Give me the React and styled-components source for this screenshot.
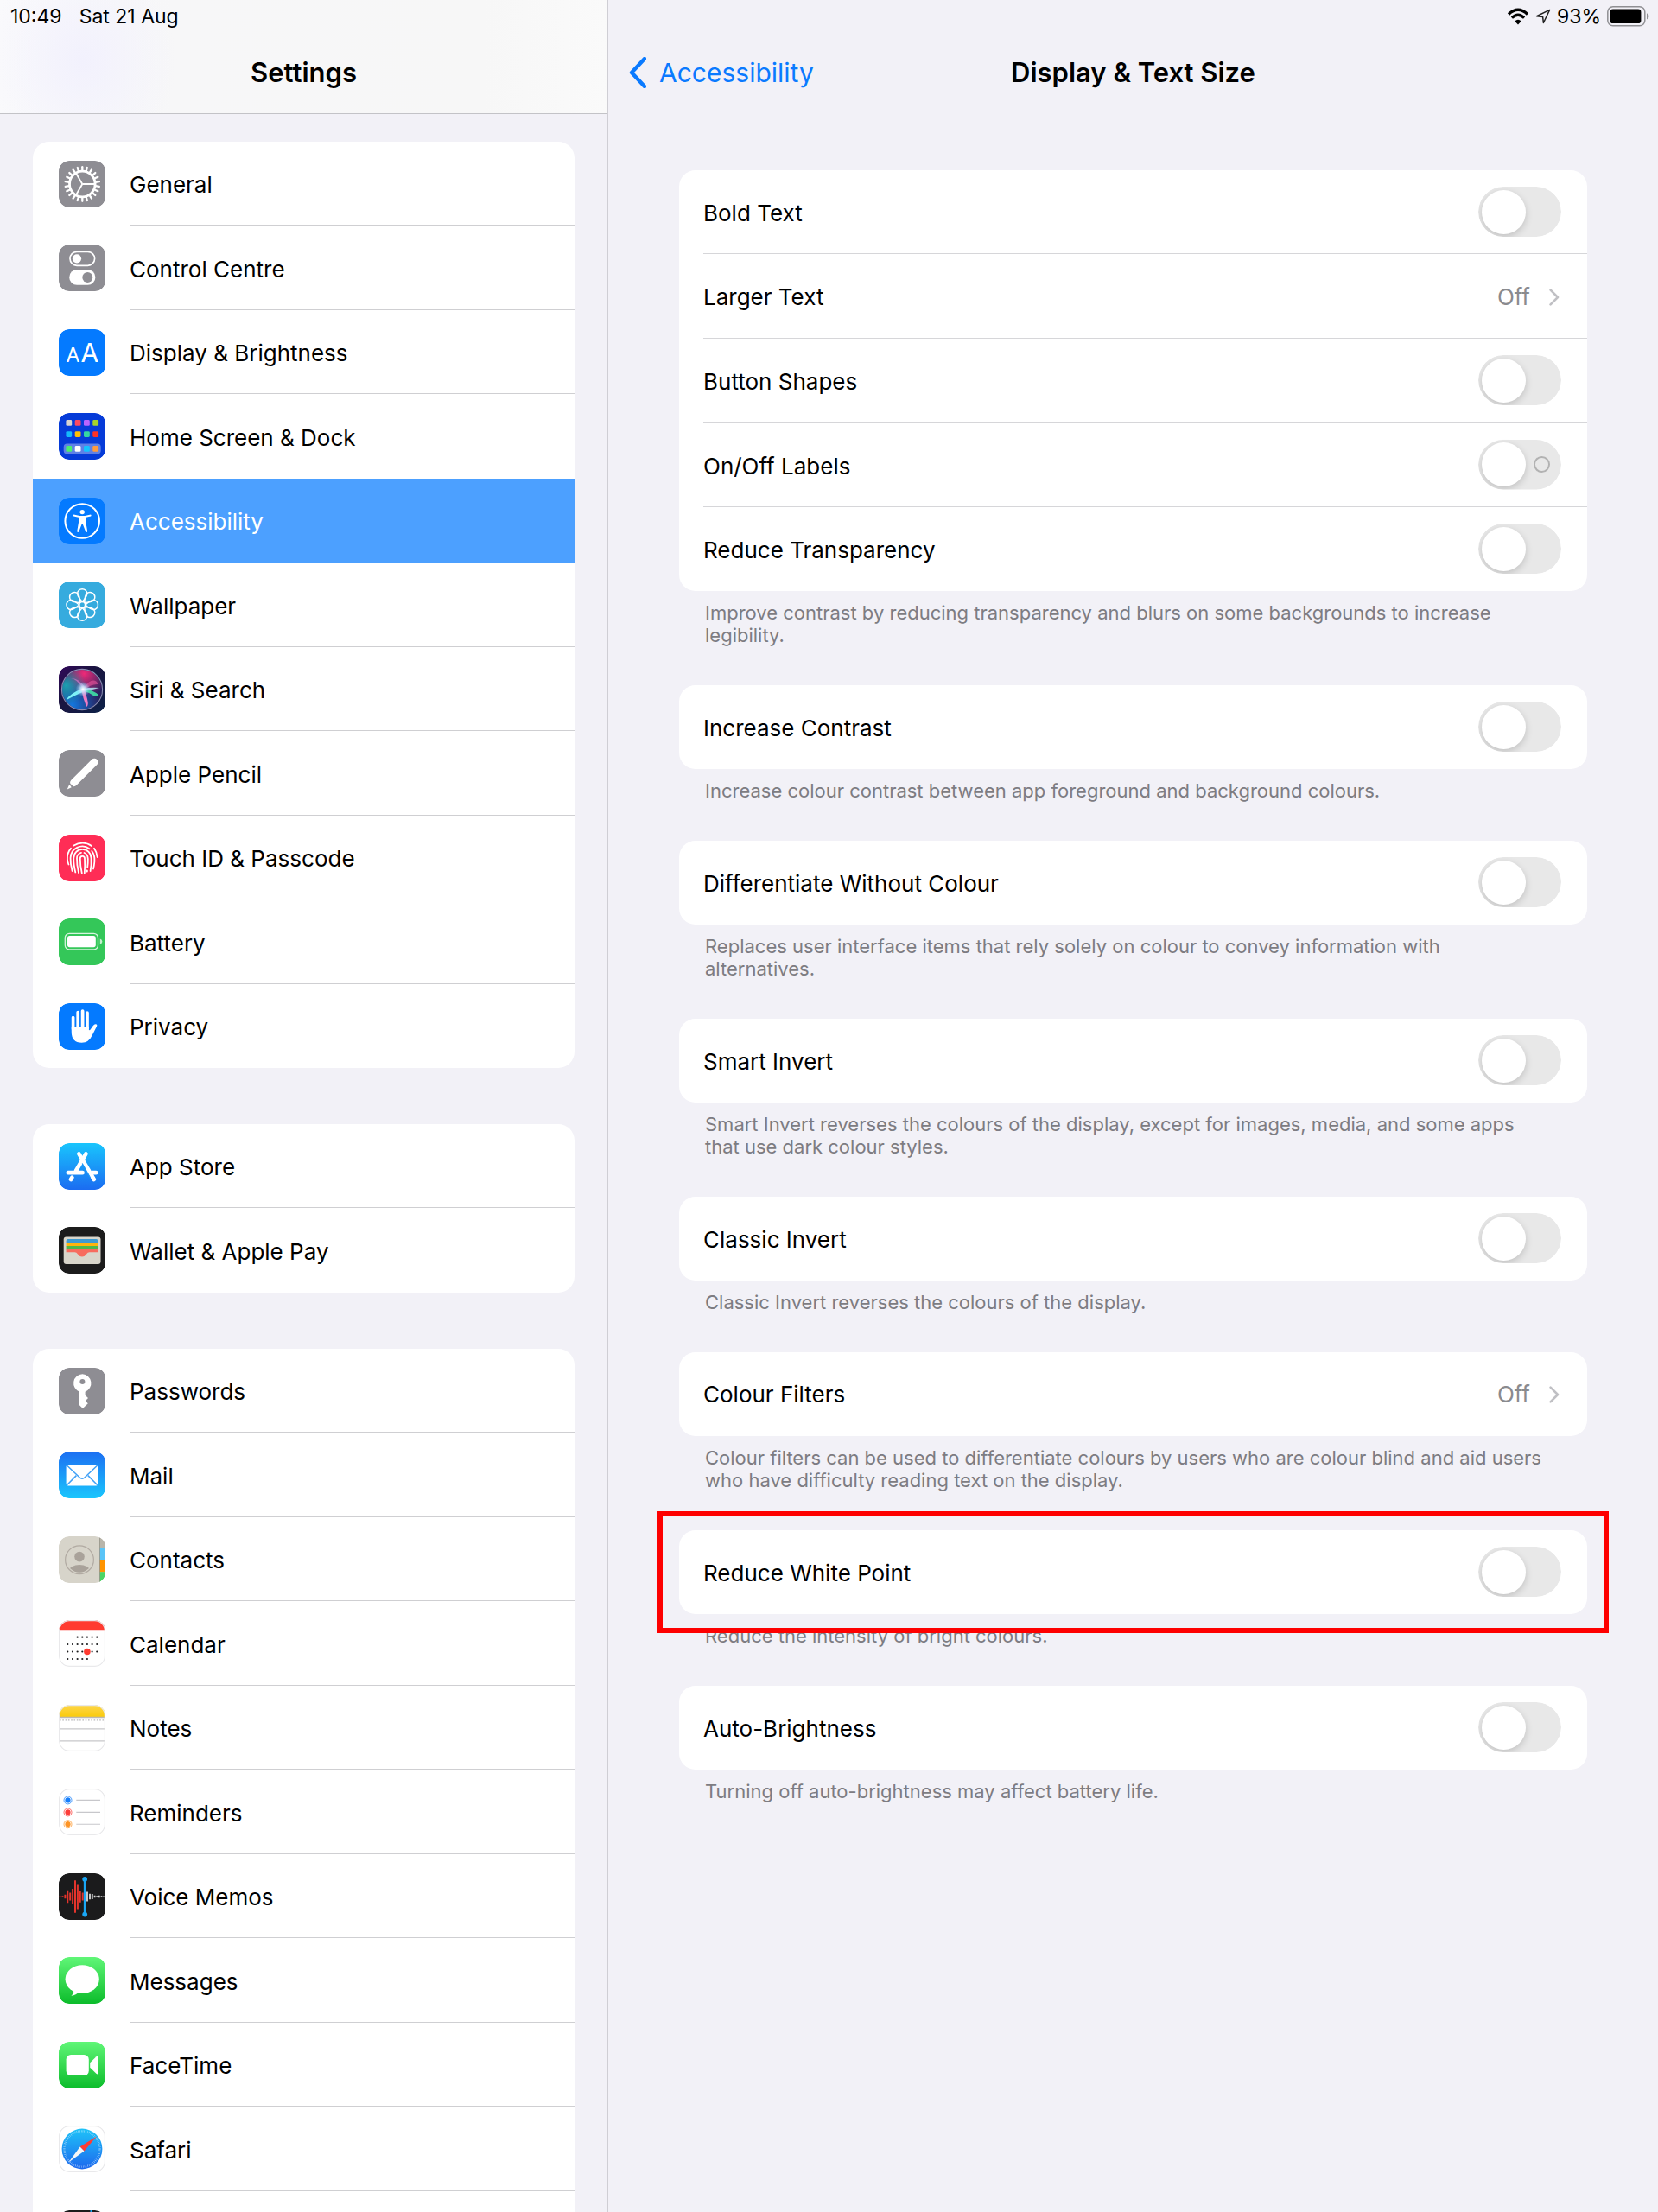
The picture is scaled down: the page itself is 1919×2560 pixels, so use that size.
import React, { useId, useState } from "react";
import styled, { createGlobalStyle, css } from "styled-components";

const GlobalStyle = createGlobalStyle`
  *, *::before, *::after { box-sizing: border-box; }
  html, body { margin: 0; height: 100%; }
  body {
    background: #f2f1f7;
    color: #000;
    font-family: Inter, "Liberation Sans", sans-serif;
    -webkit-font-smoothing: antialiased;
  }
  ul { list-style: none; margin: 0; padding: 0; }
  h1, h2, p { margin: 0; }
`;

/* ---------- layout ---------- */

const Screen = styled.div`
  display: grid;
  grid-template-columns: minmax(360px, 704px) 1fr;
  height: 100vh;
  overflow: hidden;
`;

const Sidebar = styled.aside`
  display: flex;
  flex-direction: column;
  min-height: 0;
  border-right: 1px solid #cfced4;
`;

const SidebarHeader = styled.header`
  flex: none;
  border-bottom: 1px solid #c3c3c7;
  background:
    radial-gradient(ellipse 110px 120px at 95px 70px, #f2f1fd 0, rgba(242, 241, 253, 0) 100%),
    linear-gradient(90deg, #fafafc 0, #f7f7f8 200px, #f7f7f7 560px, #fafafa 100%);
`;

const SidebarScroll = styled.nav`
  display: flex;
  flex-direction: column;
  gap: 65px;
  flex: 1;
  min-height: 0;
  padding: 32px 38px 0;
  overflow-y: auto;
  scrollbar-width: none;
`;

const Detail = styled.main`
  min-width: 0;
  overflow: hidden;
`;

const DetailBody = styled.div`
  padding: 66px 82px;
`;

const StatusBar = styled.div`
  display: flex;
  align-items: center;
  justify-content: ${(p) => (p.$end ? "flex-end" : "flex-start")};
  gap: ${(p) => (p.$end ? "7px" : "20px")};
  height: 37px;
  padding: 0 10px 0 12px;
  font-size: 23px;
  line-height: 36px;
`;

const TitleRow = styled.div`
  display: grid;
  grid-template-columns: 1fr auto 1fr;
  align-items: center;
  height: 94px;
  padding: 0 24px;
`;

const Title = styled.h1`
  grid-column: 2;
  font-size: 31px;
  font-weight: 600;
  line-height: 36px;
`;

const BackLink = styled.a`
  display: flex;
  align-items: center;
  justify-self: start;
  gap: 15px;
  color: #0a7aff;
  font-size: 30px;
  line-height: 36px;
  text-decoration: none;
`;

/* ---------- cards and rows ---------- */

const Card = styled.ul`
  flex: none;
  background: #fff;
  border-radius: 19px;
  overflow: hidden;
`;

const rowHeight = css`
  height: 97px;
  &:nth-child(even) { height: 98px; }
`;

const NavItem = styled.li`
  ${rowHeight}
`;

const NavLink = styled.a`
  display: flex;
  align-items: center;
  gap: 28px;
  height: 100%;
  padding-left: 30px;
  color: ${(p) => (p.$selected ? "#fff" : "#000")};
  background: ${(p) => (p.$selected ? "#4ca0ff" : "transparent")};
  font-size: 26px;
  line-height: 34px;
  text-decoration: none;
`;

const NavLabel = styled.span`
  display: flex;
  flex: 1;
  align-items: center;
  align-self: stretch;
  padding-top: 4px;
  border-bottom: 1px solid ${(p) => (p.$line ? "#cfcfd2" : "transparent")};
`;

const IconSvg = styled.svg`
  flex: none;
  display: block;
  width: 54px;
  height: 54px;
  border-radius: 12px;
`;

const IconText = styled.text`
  font-family: Inter, "Liberation Sans", sans-serif;
  fill: #fff;
`;

const OptionItem = styled.li`
  ${rowHeight}
  padding-left: 28px;
`;

const OptionRow = styled.div`
  display: flex;
  align-items: center;
  gap: 28px;
  height: 100%;
  padding-right: 30px;
  border-bottom: 1px solid ${(p) => (p.$line ? "#d6d6d9" : "transparent")};
  font-size: 26px;
  line-height: 34px;
`;

const OptionLabel = styled.label`
  flex: 1;
  padding-top: 4px;
`;

const OptionLink = styled.a`
  display: flex;
  flex: 1;
  align-items: center;
  gap: 22px;
  padding: 2px 2px 0 0;
  color: #000;
  text-decoration: none;
`;

const OptionName = styled.span`
  flex: 1;
`;

const OptionValue = styled.span`
  color: #8a8a8e;
`;

const Switch = styled.input`
  appearance: none;
  flex: none;
  display: flex;
  align-items: center;
  width: 96px;
  height: 58px;
  margin: 0;
  padding: 0 4px;
  border-radius: 29px;
  background: ${(p) => (p.checked ? "#34c759" : "#e8e8e8")};
  justify-content: ${(p) => (p.checked ? "flex-end" : "flex-start")};
  clip-path: inset(0 round 29px);
  cursor: pointer;

  &::before {
    content: "";
    width: 51px;
    height: 51px;
    border-radius: 50%;
    background: #fff;
    box-shadow: 0 3px 8px rgba(0, 0, 0, 0.17);
  }

  ${(p) =>
    p.$marked &&
    css`
      &::after {
        content: "";
        width: 19px;
        height: 19px;
        margin-left: 9px;
        border: 2px solid #b2b2b2;
        border-radius: 50%;
      }
    `}
`;

const Footnote = styled.p`
  padding: 12px 46px 45px 30px;
  color: #7d7c82;
  font-size: 22px;
  line-height: 26px;
`;

const CardFrame = styled.div`
  position: relative;
`;

const Highlight = styled.span`
  position: absolute;
  inset: -22px -25px;
  border: 6px solid #fe0000;
  pointer-events: none;
`;

/* ---------- icons ---------- */

function Tile({ fill, outline, children }) {
  return (
    <IconSvg viewBox="0 0 54 54" aria-hidden="true">
      <rect width="54" height="54" rx="12" fill={fill} />
      {children}
      {outline && <rect x="0.6" y="0.6" width="52.8" height="52.8" rx="11.6" fill="none" stroke="#e9e9eb" strokeWidth="1.2" />}
    </IconSvg>
  );
}

function Gradient({ id, from, to }) {
  return (
    <defs>
      <linearGradient id={id} x1="0" y1="0" x2="0" y2="1">
        <stop offset="0" stopColor={from} />
        <stop offset="1" stopColor={to} />
      </linearGradient>
    </defs>
  );
}

const GeneralIcon = () => (
  <Tile fill="#8e8d93">
    <g fill="none" stroke="#fff" transform="translate(27.3 27)">
      <circle r="14.8" strokeWidth="2.8" />
      {Array.from({ length: 22 }, (_, i) => (
        <path key={i} d="M15.5 0H19.8" strokeWidth="2.3" strokeLinecap="round" transform={`rotate(${((i + 0.5) * 360) / 22})`} />
      ))}
      {[0, 120, 240].map((a) => (
        <path key={a} d="M0 0H14.5" strokeWidth="1.8" transform={`rotate(${a})`} />
      ))}
    </g>
  </Tile>
);

const ControlIcon = () => (
  <Tile fill="#8e8d93">
    <rect x="13" y="8.3" width="28.6" height="16" rx="8" fill="none" stroke="#fff" strokeWidth="1.7" />
    <circle cx="21" cy="16.3" r="5.1" fill="#fff" />
    <rect x="12.2" y="29" width="30.2" height="17.8" rx="8.9" fill="#fff" />
    <circle cx="33.3" cy="37.9" r="6" fill="#8e8d93" />
  </Tile>
);

const DisplayIcon = () => (
  <Tile fill="#047aff">
    <IconText x="8.5" y="38" fontSize="23">A</IconText>
    <IconText x="25.5" y="38" fontSize="30">A</IconText>
  </Tile>
);

const HOME_COLORS = [
  [8, ["#d9d4d0", "#ff4a60", "#b865ff", "#a6d42c"]],
  [21.2, ["#15b9fb", "#ffc000", "#35d6a2", "#ff3226"]],
  [38, ["#4cf06e", "#ffffff", "#14c3ff", "#ff9c3e"]],
];

const HomeIcon = () => (
  <Tile fill="#063bd8">
    <rect x="5.7" y="35.4" width="43" height="12.2" rx="4" fill="#fff" opacity="0.36" />
    {HOME_COLORS.map(([y, colors]) =>
      colors.map((c, i) => <rect key={c} x={8.4 + i * 10.3} y={y} width="6.8" height="6.8" rx="1.4" fill={c} />)
    )}
  </Tile>
);

const AccessibilityIcon = () => (
  <Tile fill="#047aff">
    <circle cx="27.2" cy="27" r="19.8" fill="none" stroke="#fff" strokeWidth="2" />
    <circle cx="27.2" cy="16.6" r="2.7" fill="#fff" />
    <path d="M17.4 19.6L24.2 20.9H30.2L37 19.6Q38.3 20.3 37.2 21.4L31.4 22.7L31.3 28L33.2 39Q32.5 40.8 31.2 39.6L27.9 31H26.5L23.2 39.6Q21.9 40.8 21.2 39L23.1 28L23 22.7L17.2 21.4Q16.1 20.3 17.4 19.6Z" fill="#fff" />
  </Tile>
);

const WallpaperIcon = () => (
  <Tile fill="#36abde">
    <g fill="none" stroke="#fff" strokeWidth="1.5" transform="translate(27.2 27)">
      {Array.from({ length: 8 }, (_, i) => (
        <path key={i} d="M0 -3.6C-3.6 -7.5 -5.6 -10 -5.6 -13A5.6 5.2 0 0 1 5.6 -13C5.6 -10 3.6 -7.5 0 -3.6Z" transform={`rotate(${i * 45})`} />
      ))}
      <circle r="3.4" />
    </g>
  </Tile>
);

const SiriIcon = () => (
  <Tile fill="url(#siri-bg)">
    <defs>
      <linearGradient id="siri-bg" x1="0" y1="0" x2="1" y2="1">
        <stop offset="0" stopColor="#32085a" />
        <stop offset="0.4" stopColor="#1b1440" />
        <stop offset="1" stopColor="#0c2148" />
      </linearGradient>
      <radialGradient id="siri-pink" cx="0.55" cy="0.1" r="0.6">
        <stop offset="0" stopColor="#ee2a78" />
        <stop offset="1" stopColor="#ee2a78" stopOpacity="0" />
      </radialGradient>
      <radialGradient id="siri-blue" cx="0.25" cy="0.9" r="0.7">
        <stop offset="0" stopColor="#1378e0" />
        <stop offset="1" stopColor="#1378e0" stopOpacity="0" />
      </radialGradient>
      <radialGradient id="siri-teal" cx="0.1" cy="0.4" r="0.5">
        <stop offset="0" stopColor="#1c9fb0" />
        <stop offset="1" stopColor="#1c9fb0" stopOpacity="0" />
      </radialGradient>
      <radialGradient id="siri-glow">
        <stop offset="0" stopColor="#fff" />
        <stop offset="0.35" stopColor="#cdeaff" stopOpacity="0.85" />
        <stop offset="1" stopColor="#7fd6ff" stopOpacity="0" />
      </radialGradient>
    </defs>
    <circle cx="27" cy="27" r="23" fill="#27225e" />
    <circle cx="27" cy="27" r="23" fill="url(#siri-pink)" />
    <circle cx="27" cy="27" r="23" fill="url(#siri-blue)" />
    <circle cx="27" cy="27" r="23" fill="url(#siri-teal)" />
    <path d="M28 26Q20 14 14 14Q22 13 30 24Z" fill="#e27bd0" opacity="0.6" />
    <path d="M28 26Q40 10 46 21Q38 20 30 27Z" fill="#e9569f" opacity="0.6" />
    <path d="M27 26Q12 32 9 39Q18 34 30 29Z" fill="#7df2f7" />
    <path d="M28 25Q40 28 46 33Q44 36 40 34Q34 30 27 28Z" fill="#3fe0a6" opacity="0.9" />
    <path d="M26 26Q28 37 32 47Q35 46 33 38Q31 31 30 26Z" fill="#f07cc4" />
    <path d="M28 26Q38 24 47 25Q38 28 29 28Z" fill="#bff3ff" opacity="0.8" />
    <circle cx="28" cy="26.5" r="8.5" fill="url(#siri-glow)" />
    <circle cx="27" cy="27" r="23.6" fill="none" stroke="#9d9fc4" strokeWidth="1.1" opacity="0.85" />
  </Tile>
);

const PencilIcon = () => (
  <Tile fill="#8e8d93">
    <g fill="#fff" transform="translate(9.8 45.4) rotate(-45)">
      <path d="M0 0L5 -1.9Q6 0 5 1.9Z" />
      <path d="M7 -2Q8 -4.3 10.5 -4.3H44.5A4.3 4.3 0 0 1 44.5 4.3H10.5Q8 4.3 7 2Q7.8 0 7 -2Z" />
    </g>
  </Tile>
);

const TouchIcon = () => (
  <Tile fill="#ff2d56">
    <g fill="none" stroke="#fff" strokeWidth="1.8" strokeLinecap="round">
      <path d="M17.5 12.6A17.8 17.8 0 0 1 38 13" />
      <path d="M14 15.8A17.6 17.6 0 0 0 9.9 28Q10 31 11.4 34.5" />
      <path d="M41 15.8Q44 20 44.6 26" />
      <path d="M15.6 42Q13.3 34 13.6 27A13.7 13.7 0 0 1 35.5 16.2" />
      <path d="M38.3 19Q42 23.5 41.4 31Q41 36 40 39.5" />
      <path d="M19.3 43.5Q17 34 17.3 27A10.1 10.1 0 0 1 37.5 27Q38 35 36.6 42" />
      <path d="M23 44Q20.8 35 21 27.5A6.4 6.4 0 0 1 26 20.8" />
      <path d="M29.5 21Q33.6 22.5 33.8 28Q33.9 33 33.2 38" />
      <path d="M26.8 44.5Q24.7 36 24.8 27.5A2.6 2.6 0 0 1 30 27.5Q30.5 36 29.8 44.5" />
      <path d="M32.7 41.5V42.5" strokeWidth="2.2" />
    </g>
  </Tile>
);

const BatteryTileIcon = () => (
  <Tile fill="#34c759">
    <rect x="7.3" y="17.3" width="38.2" height="18.6" rx="5" fill="none" stroke="#d6f4de" strokeWidth="1.3" />
    <rect x="10" y="20" width="32.8" height="13.2" rx="2.6" fill="#fff" />
    <path d="M47.8 23.5Q50.4 24.6 50.4 26.7T47.8 30Z" fill="#c4efce" />
  </Tile>
);

const PrivacyIcon = () => (
  <Tile fill="#047aff">
    <g stroke="#fff" strokeWidth="3.7" strokeLinecap="round">
      <path d="M16.6 16.5V30M22.2 10.6V29M27.6 9V29M33 11V29" />
    </g>
    <path d="M14.75 27H34.85V30.5Q35.6 32 36.8 30.2L39.4 26.4Q41.6 23.6 43.8 24.6Q44.8 25.3 44 26.8L38.5 37.6Q34.8 45.8 26.6 45.8Q14.75 45.8 14.75 33Z" fill="#fff" />
  </Tile>
);

const AppStoreIcon = () => (
  <Tile fill="url(#appstore)">
    <Gradient id="appstore" from="#19c5fd" to="#1b6cf1" />
    <g fill="none" stroke="#fff" strokeWidth="4.7" strokeLinecap="round">
      <path d="M31.4 12.4L20 32" />
      <path d="M15.4 39.7L14 42" />
      <path d="M10.8 34.2H27.5" />
      <path d="M39 34.2H43.2" />
      <path d="M23.4 12.4L40.8 42" />
    </g>
    <path d="M27.2 23.5L36.5 40" stroke="#1f97f8" strokeWidth="1.2" />
  </Tile>
);

const WalletIcon = () => (
  <Tile fill="#1c1c1c">
    <rect x="5.7" y="11.4" width="42.8" height="31.6" rx="3" fill="#d9d6cb" />
    <path d="M8.6 18V16Q8.6 14 10.6 14H43.4Q45.4 14 45.4 16V18.5H8.6Z" fill="#3f9bd1" />
    <path d="M8.6 18H45.4V22.2H8.6Z" fill="#ffb40c" />
    <path d="M8.6 22H45.4V26.2H8.6Z" fill="#4fb84a" />
    <path d="M8.6 26H45.4V29.2H35.5Q33.5 29.2 32 31.5Q30 34.6 27 34.6T22 31.5Q20.5 29.2 18.5 29.2H8.6Z" fill="#f76c5e" />
  </Tile>
);

const KeyIcon = () => (
  <Tile fill="#8e8d93">
    <path
      fill="#fff"
      fillRule="evenodd"
      d="M27.4 7.2A10.6 10.6 0 0 0 24 27.7V43.2L27.8 47L33.8 41.3L30.8 38.3L34 35.1L30.6 31.8V27.7A10.6 10.6 0 0 0 27.4 7.2ZM27.4 13A3 3 0 1 1 27.4 19A3 3 0 1 1 27.4 13Z"
    />
  </Tile>
);

const MailIcon = () => (
  <Tile fill="url(#mail)">
    <Gradient id="mail" from="#1c6ff2" to="#1ac6fd" />
    <rect x="8.6" y="15" width="37" height="24.6" rx="2.4" fill="#fff" />
    <g fill="none" stroke="#3fa0f6" strokeWidth="1.5">
      <path d="M9.2 15.8L24 29.7Q27.1 32.6 30.2 29.7L45 15.8" />
      <path d="M9.4 38.8L20.4 27.6M44.8 38.8L33.8 27.6" />
    </g>
  </Tile>
);

const ContactsIcon = () => (
  <Tile fill="#d7d4ca">
    <defs>
      <clipPath id="contact-face"><circle cx="24" cy="27.2" r="14.6" /></clipPath>
      <clipPath id="contact-tile"><rect width="54" height="54" rx="12" /></clipPath>
    </defs>
    <g clipPath="url(#contact-tile)">
      <rect x="47.5" width="6.5" height="14" fill="#b9b5aa" />
      <rect x="47.5" y="14" width="6.5" height="13.6" fill="#5ac4f7" />
      <rect x="47.5" y="27.6" width="6.5" height="13.6" fill="#ff9400" />
      <rect x="47.5" y="41.2" width="6.5" height="12.8" fill="#4bd564" />
      <path d="M47.5 0V54" stroke="#8d8a80" strokeWidth="0.7" />
    </g>
    <circle cx="24" cy="27.2" r="16.4" fill="none" stroke="#b1aaa2" strokeWidth="1.2" />
    <g fill="#a9a29a" clipPath="url(#contact-face)">
      <circle cx="24" cy="23.6" r="5.8" />
      <ellipse cx="24" cy="40" rx="12" ry="7" />
    </g>
  </Tile>
);

const CALENDAR_ROWS = [
  [19.7, 2, 6],
  [28, 0, 6],
  [36.5, 0, 6],
  [45, 0, 4],
];

const CalendarIcon = () => (
  <Tile fill="#fff" outline>
    <path d="M0 12.3V12A12 12 0 0 1 12 0H42A12 12 0 0 1 54 12V12.3Z" fill="#ff3b30" />
    {CALENDAR_ROWS.map(([y, first, last]) =>
      Array.from({ length: last - first + 1 }, (_, i) => (
        <circle key={`${y}-${i}`} cx={10.3 + (first + i) * 5.66} cy={y} r="1.1" fill="#1c1c1e" />
      ))
    )}
    <circle cx="32.9" cy="36.5" r="3.8" fill="#ff3b30" />
  </Tile>
);

const NotesIcon = () => (
  <Tile fill="#fff" outline>
    <Gradient id="notes" from="#fed64b" to="#facb0c" />
    <path d="M0 14V12A12 12 0 0 1 12 0H42A12 12 0 0 1 54 12V14Z" fill="url(#notes)" />
    <path d="M0 14.5H54" stroke="#bdb9ae" strokeWidth="1.4" />
    <path d="M1 17.8H54" stroke="#b5b5b8" strokeWidth="1.3" strokeDasharray="1.6 1.7" />
    <path d="M0 27.8H54M0 41.8H54" stroke="#c7c7ca" strokeWidth="1.2" />
  </Tile>
);

const REMINDERS = [
  [13.4, "#157efb"],
  [27.4, "#fc3d39"],
  [41.2, "#fd9426"],
];

const RemindersIcon = () => (
  <Tile fill="#fff" outline>
    {REMINDERS.map(([y, color]) => (
      <g key={color}>
        <circle cx="10.5" cy={y} r="4.5" fill="none" stroke={color} strokeWidth="1" opacity="0.75" />
        <circle cx="10.5" cy={y} r="3.1" fill={color} />
        <path d={`M20.3 ${y}H48`} stroke="#c7c7cb" strokeWidth="1.1" />
      </g>
    ))}
  </Tile>
);

const VOICE_BARS = [
  [1.6, 1.2], [4.5, 1.4], [7.4, 4.5], [10.3, 14.5], [13.2, 9], [16.1, 18], [19, 37.5], [21.9, 29], [24.8, 13.5], [27.7, 9],
];
const VOICE_TAIL = [
  [33, 11], [36, 6.5], [38.8, 6], [41.6, 2.5], [44.2, 1.6], [46.8, 2.4], [49.5, 1.6], [52, 1.2],
];

const VoiceIcon = () => (
  <Tile fill="#1b1b1c">
    {VOICE_BARS.map(([x, h]) => <path key={x} d={`M${x} ${27 - h / 2}v${h}`} stroke="#e5342c" strokeWidth="2" />)}
    {VOICE_TAIL.map(([x, h]) => <path key={x} d={`M${x} ${27 - h / 2}v${h}`} stroke="#dcdcdc" strokeWidth="1.8" />)}
    <path d="M30.2 7V47.5" stroke="#1aa7f5" strokeWidth="2.7" />
    <circle cx="30.2" cy="6.8" r="2.9" fill="#1aa7f5" />
    <circle cx="30.2" cy="47.6" r="2.9" fill="#1aa7f5" />
  </Tile>
);

const MessagesIcon = () => (
  <Tile fill="url(#green)">
    <Gradient id="green" from="#60f677" to="#0cbc2b" />
    <ellipse cx="27.2" cy="25.6" rx="19.6" ry="16.4" fill="#fff" />
    <path d="M17 38Q18 42 14.4 44.8Q20.5 44 23 40.5Z" fill="#fff" />
  </Tile>
);

const FaceTimeIcon = () => (
  <Tile fill="url(#green-cam)">
    <Gradient id="green-cam" from="#60f677" to="#0cbc2b" />
    <rect x="8.6" y="15" width="26.2" height="24" rx="5.5" fill="#fff" />
    <path d="M36.2 24.3L43.4 17.2Q45.6 15.6 45.6 18V36Q45.6 38.4 43.4 36.8L36.2 29.7Z" fill="#fff" />
  </Tile>
);

const SafariIcon = () => (
  <Tile fill="#fff" outline>
    <Gradient id="safari" from="#1fc3f8" to="#1c68ee" />
    <circle cx="27" cy="27" r="23.4" fill="url(#safari)" />
    <circle cx="27" cy="27" r="20.6" fill="none" stroke="#d6eefe" strokeWidth="2.4" strokeDasharray="0.5 1.3" opacity="0.8" />
    <path d="M43.8 12.4L24.6 24.6L29.4 29.6Z" fill="#ff3c34" />
    <path d="M11.4 42.6L24.6 24.6L29.4 29.6Z" fill="#f6f6f6" />
  </Tile>
);

const StocksIcon = () => (
  <Tile fill="#1b1b1c">
    <path d="M37.5 0V54" stroke="#1aa7f5" strokeWidth="2" />
  </Tile>
);

const ChevronLeft = () => (
  <svg width="20" height="36" viewBox="0 0 20 36" fill="none" aria-hidden="true">
    <path d="M18 2L3 18L18 34" stroke="#0a7aff" strokeWidth="4.4" strokeLinecap="round" strokeLinejoin="round" />
  </svg>
);

const ChevronRight = () => (
  <svg width="12" height="20" viewBox="0 0 12 20" fill="none" aria-hidden="true">
    <path d="M1.6 1.6L10 10L1.6 18.4" stroke="#c0c0c4" strokeWidth="2.6" strokeLinecap="round" strokeLinejoin="round" />
  </svg>
);

const WifiIcon = () => (
  <svg width="26" height="20" viewBox="0 0 26 20" fill="none" aria-hidden="true">
    <path d="M2 7.4Q13 -3 24 7.4" stroke="#000" strokeWidth="3.4" />
    <path d="M5.9 11.6Q13 5 20.1 11.6" stroke="#000" strokeWidth="3.2" />
    <path d="M13 19.4L9.2 15.4Q13 12.2 16.8 15.4Z" fill="#000" />
  </svg>
);

const LocationIcon = () => (
  <svg width="18" height="18" viewBox="0 0 18 18" fill="none" aria-hidden="true">
    <path d="M16.6 1.4L1.5 8.7L8.6 9.4L9.4 16.5Z" stroke="#222" strokeWidth="1.5" strokeLinejoin="round" />
  </svg>
);

const StatusBattery = () => (
  <svg width="49" height="24" viewBox="0 0 49 24" fill="none" aria-hidden="true">
    <rect x="0.8" y="0.8" width="43" height="22" rx="6" stroke="#8f8f93" strokeWidth="1.5" />
    <rect x="3.4" y="3.5" width="36" height="16.6" rx="3.4" fill="#000" />
    <path d="M46 8.3Q48.6 9.4 48.6 11.8T46 15.4Z" fill="#8f8f93" />
  </svg>
);

/* ---------- data ---------- */

const NAV_GROUPS = [
  [
    ["General", GeneralIcon],
    ["Control Centre", ControlIcon],
    ["Display & Brightness", DisplayIcon],
    ["Home Screen & Dock", HomeIcon],
    ["Accessibility", AccessibilityIcon],
    ["Wallpaper", WallpaperIcon],
    ["Siri & Search", SiriIcon],
    ["Apple Pencil", PencilIcon],
    ["Touch ID & Passcode", TouchIcon],
    ["Battery", BatteryTileIcon],
    ["Privacy", PrivacyIcon],
  ],
  [
    ["App Store", AppStoreIcon],
    ["Wallet & Apple Pay", WalletIcon],
  ],
  [
    ["Passwords", KeyIcon],
    ["Mail", MailIcon],
    ["Contacts", ContactsIcon],
    ["Calendar", CalendarIcon],
    ["Notes", NotesIcon],
    ["Reminders", RemindersIcon],
    ["Voice Memos", VoiceIcon],
    ["Messages", MessagesIcon],
    ["FaceTime", FaceTimeIcon],
    ["Safari", SafariIcon],
    ["", StocksIcon],
  ],
];

const SECTIONS = [
  {
    options: [
      { name: "Bold Text" },
      { name: "Larger Text", value: "Off" },
      { name: "Button Shapes" },
      { name: "On/Off Labels", marked: true },
      { name: "Reduce Transparency" },
    ],
    note: "Improve contrast by reducing transparency and blurs on some backgrounds to increase legibility.",
  },
  { options: [{ name: "Increase Contrast" }], note: "Increase colour contrast between app foreground and background colours." },
  {
    options: [{ name: "Differentiate Without Colour" }],
    note: "Replaces user interface items that rely solely on colour to convey information with alternatives.",
  },
  {
    options: [{ name: "Smart Invert" }],
    note: "Smart Invert reverses the colours of the display, except for images, media, and some apps that use dark colour styles.",
  },
  { options: [{ name: "Classic Invert" }], note: "Classic Invert reverses the colours of the display." },
  {
    options: [{ name: "Colour Filters", value: "Off" }],
    note: "Colour filters can be used to differentiate colours by users who are colour blind and aid users who have difficulty reading text on the display.",
  },
  { options: [{ name: "Reduce White Point" }], note: "Reduce the intensity of bright colours.", highlighted: true },
  { options: [{ name: "Auto-Brightness" }], note: "Turning off auto-brightness may affect battery life." },
];

/* ---------- components ---------- */

const SELECTED = "Accessibility";

function NavGroup({ items }) {
  return (
    <Card>
      {items.map(([name, Icon], i) => {
        const next = items[i + 1];
        const selected = name === SELECTED;
        return (
          <NavItem key={name}>
            <NavLink
              href="#"
              $selected={selected}
              aria-current={selected ? "page" : undefined}
              aria-label={name || "More apps"}
            >
              <Icon />
              <NavLabel $line={Boolean(next) && !selected && next[0] !== SELECTED}>{name}</NavLabel>
            </NavLink>
          </NavItem>
        );
      })}
    </Card>
  );
}

function Option({ name, value, marked, line }) {
  const id = useId();
  const [on, setOn] = useState(false);
  return (
    <OptionItem>
      <OptionRow $line={line}>
        {value ? (
          <OptionLink href="#">
            <OptionName>{name}</OptionName>
            <OptionValue>{value}</OptionValue>
            <ChevronRight />
          </OptionLink>
        ) : (
          <>
            <OptionLabel htmlFor={id}>{name}</OptionLabel>
            <Switch id={id} type="checkbox" role="switch" checked={on} $marked={marked} onChange={(e) => setOn(e.target.checked)} />
          </>
        )}
      </OptionRow>
    </OptionItem>
  );
}

function Section({ options, note, highlighted }) {
  return (
    <section>
      <CardFrame>
        <Card>
          {options.map((o, i) => (
            <Option key={o.name} {...o} line={i < options.length - 1} />
          ))}
        </Card>
        {highlighted && <Highlight />}
      </CardFrame>
      <Footnote>{note}</Footnote>
    </section>
  );
}

export default function App() {
  return (
    <>
      <GlobalStyle />
      <Screen>
        <Sidebar>
          <SidebarHeader>
            <StatusBar>
              <span>10:49</span>
              <span>Sat 21 Aug</span>
            </StatusBar>
            <TitleRow>
              <Title>Settings</Title>
            </TitleRow>
          </SidebarHeader>
          <SidebarScroll>
            {NAV_GROUPS.map((items) => (
              <NavGroup key={items[0][0]} items={items} />
            ))}
          </SidebarScroll>
        </Sidebar>
        <Detail>
          <StatusBar $end>
            <WifiIcon />
            <LocationIcon />
            <span>93%</span>
            <StatusBattery />
          </StatusBar>
          <TitleRow>
            <BackLink href="#">
              <ChevronLeft />
              Accessibility
            </BackLink>
            <Title as="h2">Display &amp; Text Size</Title>
          </TitleRow>
          <DetailBody>
            {SECTIONS.map((s) => (
              <Section key={s.note} {...s} />
            ))}
          </DetailBody>
        </Detail>
      </Screen>
    </>
  );
}
